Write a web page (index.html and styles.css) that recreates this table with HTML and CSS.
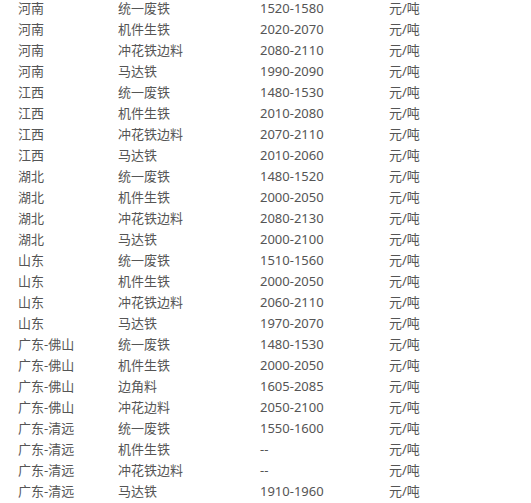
FILE: index.html
```html
<!DOCTYPE html>
<html>
<head>
<meta charset="utf-8">
<link rel="stylesheet" href="styles.css">
</head>
<body>
<div class="table">
<div class="row"><span>河南</span><span>统一废铁</span><span>1520-1580</span><span>元/吨</span></div>
<div class="row"><span>河南</span><span>机件生铁</span><span>2020-2070</span><span>元/吨</span></div>
<div class="row"><span>河南</span><span>冲花铁边料</span><span>2080-2110</span><span>元/吨</span></div>
<div class="row"><span>河南</span><span>马达铁</span><span>1990-2090</span><span>元/吨</span></div>
<div class="row"><span>江西</span><span>统一废铁</span><span>1480-1530</span><span>元/吨</span></div>
<div class="row"><span>江西</span><span>机件生铁</span><span>2010-2080</span><span>元/吨</span></div>
<div class="row"><span>江西</span><span>冲花铁边料</span><span>2070-2110</span><span>元/吨</span></div>
<div class="row"><span>江西</span><span>马达铁</span><span>2010-2060</span><span>元/吨</span></div>
<div class="row"><span>湖北</span><span>统一废铁</span><span>1480-1520</span><span>元/吨</span></div>
<div class="row"><span>湖北</span><span>机件生铁</span><span>2000-2050</span><span>元/吨</span></div>
<div class="row"><span>湖北</span><span>冲花铁边料</span><span>2080-2130</span><span>元/吨</span></div>
<div class="row"><span>湖北</span><span>马达铁</span><span>2000-2100</span><span>元/吨</span></div>
<div class="row"><span>山东</span><span>统一废铁</span><span>1510-1560</span><span>元/吨</span></div>
<div class="row"><span>山东</span><span>机件生铁</span><span>2000-2050</span><span>元/吨</span></div>
<div class="row"><span>山东</span><span>冲花铁边料</span><span>2060-2110</span><span>元/吨</span></div>
<div class="row"><span>山东</span><span>马达铁</span><span>1970-2070</span><span>元/吨</span></div>
<div class="row"><span>广东-佛山</span><span>统一废铁</span><span>1480-1530</span><span>元/吨</span></div>
<div class="row"><span>广东-佛山</span><span>机件生铁</span><span>2000-2050</span><span>元/吨</span></div>
<div class="row"><span>广东-佛山</span><span>边角料</span><span>1605-2085</span><span>元/吨</span></div>
<div class="row"><span>广东-佛山</span><span>冲花边料</span><span>2050-2100</span><span>元/吨</span></div>
<div class="row"><span>广东-清远</span><span>统一废铁</span><span>1550-1600</span><span>元/吨</span></div>
<div class="row"><span>广东-清远</span><span>机件生铁</span><span>--</span><span>元/吨</span></div>
<div class="row"><span>广东-清远</span><span>冲花铁边料</span><span>--</span><span>元/吨</span></div>
<div class="row"><span>广东-清远</span><span>马达铁</span><span>1910-1960</span><span>元/吨</span></div>
</div>
</body>
</html>
```
FILE: styles.css
```css
html, body {
  margin: 0;
  padding: 0;
  background: #fff;
}
body {
  font-family: "Noto Sans", "Noto Sans CJK SC", sans-serif;
  font-size: 13px;
  color: #555;
}
.table {
  margin-top: -2px;
  padding-left: 18px;
}
.row {
  display: grid;
  grid-template-columns: 100px 142px 129px auto;
  height: 21px;
  line-height: 21px;
  white-space: nowrap;
}
```
